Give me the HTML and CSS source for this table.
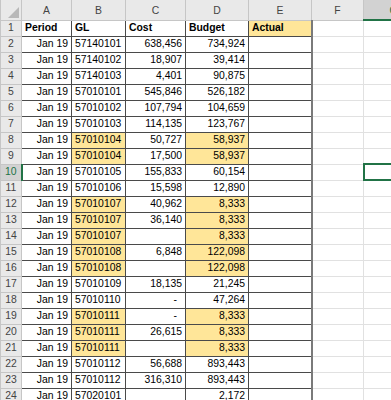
FILE: index.html
```html
<!DOCTYPE html>
<html lang="en">
<head>
    <meta charset="UTF-8">
    <meta name="viewport" content="width=device-width, initial-scale=1.0">
    <title>Budget sheet</title>
    <link rel="stylesheet" href="styles.css">
</head>
<body>
    <table class="sheet">
        <colgroup>
            <col class="c-idx">
            <col class="c-a">
            <col class="c-b">
            <col class="c-c">
            <col class="c-d">
            <col class="c-e">
            <col class="c-f">
            <col class="c-g">
        </colgroup>
        <thead>
            <tr class="letters">
                <th class="corner"><span class="tri"></span></th>
                <th>A</th><th>B</th><th>C</th><th>D</th><th>E</th><th>F</th><th class="sel">G</th>
            </tr>
        </thead>
        <tbody>
            <tr class="titles"><th>1</th><td>Period</td><td>GL</td><td>Cost</td><td>Budget</td><td class="y">Actual</td><td></td><td></td></tr>
            <tr><th>2</th><td>Jan 19</td><td>57140101</td><td>638,456</td><td>734,924</td><td></td><td></td><td></td></tr>
            <tr><th>3</th><td>Jan 19</td><td>57140102</td><td>18,907</td><td>39,414</td><td></td><td></td><td></td></tr>
            <tr><th>4</th><td>Jan 19</td><td>57140103</td><td>4,401</td><td>90,875</td><td></td><td></td><td></td></tr>
            <tr><th>5</th><td>Jan 19</td><td>57010101</td><td>545,846</td><td>526,182</td><td></td><td></td><td></td></tr>
            <tr><th>6</th><td>Jan 19</td><td>57010102</td><td>107,794</td><td>104,659</td><td></td><td></td><td></td></tr>
            <tr><th>7</th><td>Jan 19</td><td>57010103</td><td>114,135</td><td>123,767</td><td></td><td></td><td></td></tr>
            <tr><th>8</th><td>Jan 19</td><td class="y">57010104</td><td>50,727</td><td class="y">58,937</td><td></td><td></td><td></td></tr>
            <tr><th>9</th><td>Jan 19</td><td class="y">57010104</td><td>17,500</td><td class="y">58,937</td><td></td><td></td><td></td></tr>
            <tr class="active"><th>10</th><td>Jan 19</td><td>57010105</td><td>155,833</td><td>60,154</td><td></td><td></td><td class="cursor"></td></tr>
            <tr><th>11</th><td>Jan 19</td><td>57010106</td><td>15,598</td><td>12,890</td><td></td><td></td><td></td></tr>
            <tr><th>12</th><td>Jan 19</td><td class="y">57010107</td><td>40,962</td><td class="y">8,333</td><td></td><td></td><td></td></tr>
            <tr><th>13</th><td>Jan 19</td><td class="y">57010107</td><td>36,140</td><td class="y">8,333</td><td></td><td></td><td></td></tr>
            <tr><th>14</th><td>Jan 19</td><td class="y">57010107</td><td></td><td class="y">8,333</td><td></td><td></td><td></td></tr>
            <tr><th>15</th><td>Jan 19</td><td class="y">57010108</td><td>6,848</td><td class="y">122,098</td><td></td><td></td><td></td></tr>
            <tr><th>16</th><td>Jan 19</td><td class="y">57010108</td><td></td><td class="y">122,098</td><td></td><td></td><td></td></tr>
            <tr><th>17</th><td>Jan 19</td><td>57010109</td><td>18,135</td><td>21,245</td><td></td><td></td><td></td></tr>
            <tr><th>18</th><td>Jan 19</td><td>57010110</td><td class="dash">-</td><td>47,264</td><td></td><td></td><td></td></tr>
            <tr><th>19</th><td>Jan 19</td><td class="y">57010111</td><td class="dash">-</td><td class="y">8,333</td><td></td><td></td><td></td></tr>
            <tr><th>20</th><td>Jan 19</td><td class="y">57010111</td><td>26,615</td><td class="y">8,333</td><td></td><td></td><td></td></tr>
            <tr><th>21</th><td>Jan 19</td><td class="y">57010111</td><td></td><td class="y">8,333</td><td></td><td></td><td></td></tr>
            <tr><th>22</th><td>Jan 19</td><td>57010112</td><td>56,688</td><td>893,443</td><td></td><td></td><td></td></tr>
            <tr><th>23</th><td>Jan 19</td><td>57010112</td><td>316,310</td><td>893,443</td><td></td><td></td><td></td></tr>
            <tr><th>24</th><td>Jan 19</td><td>57020101</td><td></td><td>2,172</td><td></td><td></td><td></td></tr>
        </tbody>
    </table>
</body>
</html>
```

FILE: styles.css
```css
:root {
    --grid: #e1e1e1;
    --line: #4a4a4a;
    --head-bg: #e9e9e9;
    --head-sel: #d2d2d2;
    --green: #217346;
    --gold: #ffe699;
}

* {
    margin: 0;
    padding: 0;
    box-sizing: border-box;
}

body {
    background: #fff;
    overflow: hidden;
    font-family: 'Liberation Sans', Arial, sans-serif;
}

.sheet {
    border-collapse: collapse;
    table-layout: fixed;
    width: 423px;
    font-size: 10.4px;
    color: #000;
}

.c-idx { width: 21px; }
.c-a { width: 50px; }
.c-b { width: 54px; }
.c-c { width: 60px; }
.c-d { width: 63px; }
.c-e { width: 63px; }
.c-f { width: 52px; }
.c-g { width: 60px; }

.sheet tr {
    height: 16px;
}

.sheet .letters {
    height: 20px;
}

.sheet th {
    background: var(--head-bg);
    color: #444;
    font-weight: normal;
    font-size: 10.4px;
    border: 1px solid #c6c6c6;
    text-align: center;
    line-height: 14px;
    padding: 0;
}

.letters th {
    border-top: none;
    padding-top: 3px;
}

.letters th.sel {
    background: var(--head-sel);
    color: var(--green);
    border-bottom: 2px solid var(--green);
}

.corner {
    position: relative;
}

.corner .tri {
    position: absolute;
    right: 2px;
    bottom: 2px;
    width: 0;
    height: 0;
    border-left: 11px solid transparent;
    border-bottom: 11px solid #b8b8b8;
}

.sheet td {
    border: 1px solid var(--grid);
    line-height: 14px;
    padding: 0 3px;
    white-space: nowrap;
    overflow: hidden;
}

.sheet td:nth-child(-n+6) {
    border-color: var(--line);
}

.sheet td:nth-child(2) {
    border-left-color: #c6c6c6;
}

.sheet td:nth-child(6) {
    border-right: 2px solid #7a7a7a;
}

.sheet td:nth-child(2),
.sheet td:nth-child(4),
.sheet td:nth-child(5) {
    text-align: right;
}

.sheet td.dash {
    padding-right: 8px;
}

.titles td {
    font-weight: bold;
    text-align: left !important;
}

.titles td:nth-child(-n+6) {
    border-top-color: #c6c6c6;
}

.y {
    background: var(--gold);
}

.active th {
    background: var(--head-sel);
    color: var(--green);
    border-right: 2px solid var(--green);
}

.sheet td.cursor {
    border: 2px solid var(--green);
}
```
